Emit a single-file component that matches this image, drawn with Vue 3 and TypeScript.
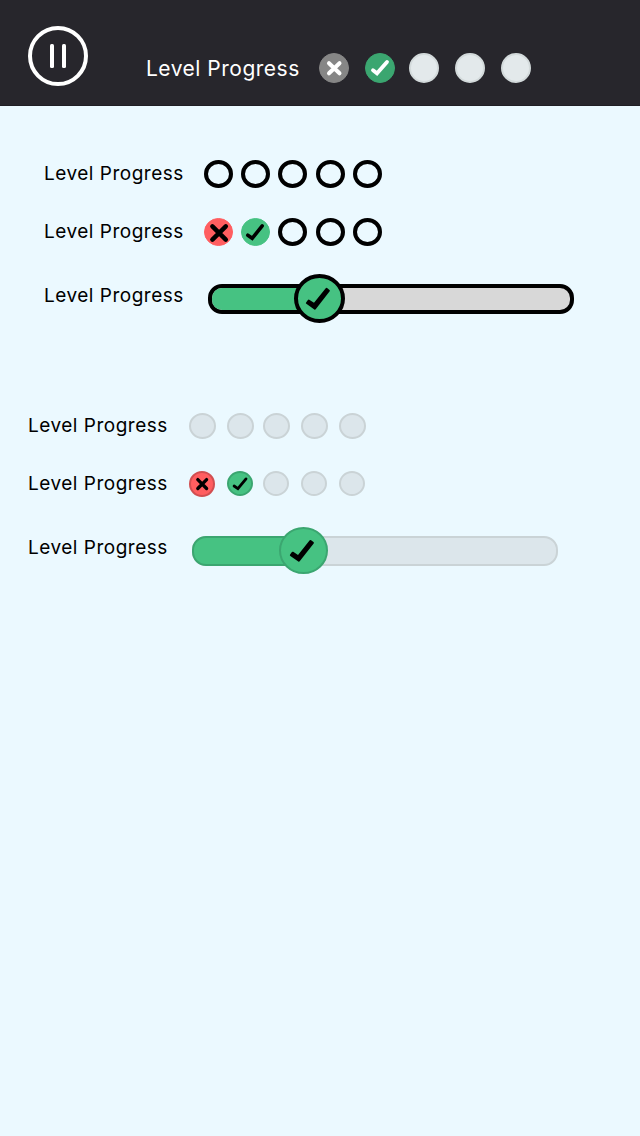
<script setup lang="ts">
type Mark = 'cross' | 'check' | 'empty'

interface Dot {
  w: number
  h: number
  gap: number
  fill: string
  edge: string
  border: number
  mark: Mark
  path?: string
  ink?: string
  stroke?: number
}

interface Row {
  kind: string
  dots: Dot[]
}

const empty = (w: number, h: number, gap: number, fill: string, edge: string, border: number): Dot => ({
  w, h, gap, fill, edge, border, mark: 'empty',
})

const navDots: Dot[] = [
  { w: 30, h: 30, gap: 0, fill: '#868686', edge: '#868686', border: 1, mark: 'cross', path: 'M10 10.2L20.5 20.3M20.5 10.2L10 20.3', ink: '#fff', stroke: 4 },
  { w: 30, h: 30, gap: 16, fill: '#3ba670', edge: '#3ba670', border: 1, mark: 'check', path: 'M8 17.2L12 20.3L22 9', ink: '#fff', stroke: 3.8 },
  ...[14, 16, 16].map((g) => empty(30, 30, g, '#e3e9eb', '#d3dadb', 2)),
]

const ring = (gap: number): Dot => empty(29, 28, gap, '#ebf9ff', '#000', 4)

const rows: Row[] = [
  { kind: 'bold first', dots: [0, 8, 8, 9, 8].map(ring) },
  {
    kind: 'bold second',
    dots: [
      { w: 29, h: 28, gap: 0, fill: '#ff5e60', edge: '#ff5e60', border: 1, mark: 'cross', path: 'M8.4 8.4L21.8 21.7M21.8 8.4L8.4 21.7', ink: '#000', stroke: 4.5 },
      { w: 29, h: 28, gap: 8, fill: '#46c282', edge: '#46c282', border: 1, mark: 'check', path: 'M6.8 17.2L11.2 20.3L21.2 7.8', ink: '#000', stroke: 3.6 },
      ...[8, 9, 8].map(ring),
    ],
  },
]

const softRows: Row[] = [
  { kind: 'soft first', dots: [0, 11, 9, 11, 11].map((g) => empty(27, 26, g, '#dce6eb', '#cad3d6', 2)) },
  {
    kind: 'soft second',
    dots: [
      { w: 26, h: 26, gap: 0, fill: '#ff5e60', edge: '#d14f51', border: 2, mark: 'cross', path: 'M8.8 8.6L17.6 17.5M17.6 8.6L8.8 17.5', ink: '#000', stroke: 3.3 },
      { w: 26, h: 25, gap: 12, fill: '#46c282', edge: '#3ba670', border: 2, mark: 'check', path: 'M7.1 15L10.9 17.6L19 7.9', ink: '#000', stroke: 2.8 },
      ...[10, 12, 12].map((g) => empty(26, 25, g, '#dce6eb', '#cad3d6', 2)),
    ],
  },
]

const groups = [
  { name: 'bold', rows, knob: { w: 51, h: 49, edge: '#000', border: 4, shift: 'translate(0 0)' } },
  { name: 'soft', rows: softRows, knob: { w: 49, h: 47, edge: '#3ba670', border: 2, shift: 'translate(-1 -0.9)' } },
]
</script>

<template>
  <div class="screen">
    <header class="nav">
      <svg class="pause" width="60" height="60" viewBox="0 0 60 60">
        <circle cx="30" cy="30" r="28" fill="none" stroke="#fff" stroke-width="4" />
        <rect x="22" y="18" width="4" height="24" rx="1.5" fill="#fff" />
        <rect x="34" y="18" width="4" height="24" rx="1.5" fill="#fff" />
      </svg>
      <span class="nav-label">Level Progress</span>
      <div class="dots nav-dots">
        <svg v-for="(d, i) in navDots" :key="i" :width="d.w" :height="d.h" :style="{ marginLeft: d.gap + 'px' }">
          <ellipse :cx="d.w / 2" :cy="d.h / 2" :rx="(d.w - d.border) / 2" :ry="(d.h - d.border) / 2" :fill="d.fill" :stroke="d.edge" :stroke-width="d.border" />
          <path v-if="d.path" :d="d.path" fill="none" :stroke="d.ink" :stroke-width="d.stroke" stroke-linecap="round" />
        </svg>
      </div>
    </header>

    <section v-for="g in groups" :key="g.name" class="group" :class="g.name">
      <div v-for="row in g.rows" :key="row.kind" class="row" :class="row.kind">
        <span class="label">Level Progress</span>
        <div class="dots">
          <svg v-for="(d, i) in row.dots" :key="i" :width="d.w" :height="d.h" :style="{ marginLeft: d.gap + 'px' }">
            <ellipse :cx="d.w / 2" :cy="d.h / 2" :rx="(d.w - d.border) / 2" :ry="(d.h - d.border) / 2" :fill="d.fill" :stroke="d.edge" :stroke-width="d.border" />
            <path v-if="d.path" :d="d.path" fill="none" :stroke="d.ink" :stroke-width="d.stroke" stroke-linecap="round" />
          </svg>
        </div>
      </div>
      <div class="row slider-row">
        <span class="label">Level Progress</span>
        <div class="track">
          <div class="fill"></div>
          <svg class="knob" :width="g.knob.w" :height="g.knob.h">
            <ellipse :cx="g.knob.w / 2" :cy="g.knob.h / 2" :rx="(g.knob.w - g.knob.border) / 2" :ry="(g.knob.h - g.knob.border) / 2" fill="#46c282" :stroke="g.knob.edge" :stroke-width="g.knob.border" />
            <path d="M12.9 29L14.7 26.6L20.2 30.2L32.5 14.9L34.9 16.7L20.9 34.6Z" :transform="g.knob.shift" fill="#000" stroke="#000" stroke-width="2" stroke-linejoin="round" />
          </svg>
        </div>
      </div>
    </section>
  </div>
</template>

<style>
body {
  margin: 0;
  background: #ebf9ff;
}
</style>

<style scoped>
.screen {
  width: 640px;
  height: 1136px;
  overflow: hidden;
  background: #ebf9ff;
  font-family: Inter, "Liberation Sans", sans-serif;
  color: #000;
}
.nav {
  box-sizing: border-box;
  height: 106px;
  display: flex;
  align-items: flex-start;
  padding: 26px 0 0 28px;
  background: #27262c;
  border-bottom: 1px solid #1f1e24;
}
.pause {
  display: block;
  flex: none;
}
.nav-label {
  width: 173px;
  margin: 28px 0 0 58px;
  font-size: 21px;
  line-height: 30px;
  letter-spacing: 0.5px;
  color: #fff;
  white-space: nowrap;
}
.nav-dots {
  margin-top: 27px;
}
.dots {
  display: flex;
  align-items: flex-start;
}
.dots svg {
  display: block;
  flex: none;
}
.group {
  padding-left: 44px;
  padding-top: 54px;
}
.group.soft {
  padding-left: 28px;
  padding-top: 88px;
}
.row {
  display: flex;
  align-items: flex-start;
  height: 58px;
}
.label {
  width: 160px;
  flex: none;
  margin-top: 1px;
  font-size: 19px;
  line-height: 26px;
  letter-spacing: 0.5px;
  white-space: nowrap;
}
.soft .label {
  width: 161px;
  margin-top: 0;
}
.slider-row {
  padding-top: 6px;
  height: 43px;
}
.track {
  box-sizing: border-box;
  position: relative;
  width: 366px;
  height: 30px;
  margin: 2px 0 0 4px;
  border: 4px solid #000;
  border-radius: 14px;
  background: #d8d8d8;
}
.fill {
  width: 105px;
  height: 100%;
  border-radius: 10px 0 0 10px;
  background: #46c282;
}
.knob {
  position: absolute;
  left: 82px;
  top: -14px;
}
.soft .track {
  margin: 1px 0 0 3px;
  border: 2px solid #cad3d6;
  background: #dce6eb;
}
.soft .fill {
  box-sizing: border-box;
  width: 110px;
  height: 30px;
  margin: -2px 0 0 -2px;
  border: 2px solid #3ba670;
  border-radius: 14px 0 0 14px;
}
.soft .knob {
  left: 85px;
  top: -11px;
}
</style>
